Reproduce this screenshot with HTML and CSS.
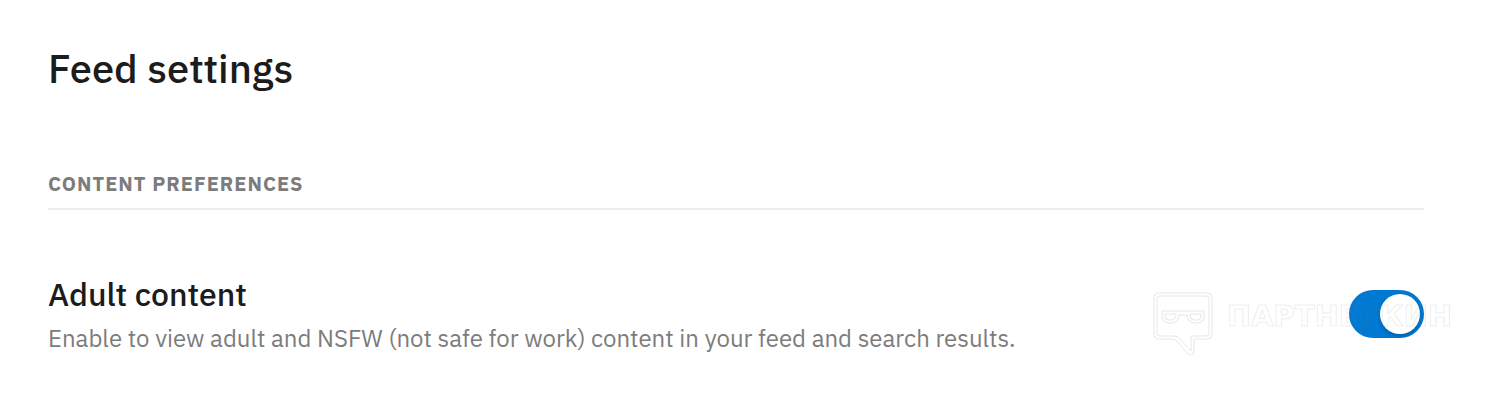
FILE: index.html
```html
<!DOCTYPE html>
<html lang="en">
<head>
  <meta charset="utf-8">
  <title>Feed settings</title>
  <link rel="stylesheet" href="styles.css">
</head>
<body>
  <main class="settings">
    <h1 class="title">Feed settings</h1>
    <h2 class="section-title">Content preferences</h2>
    <div class="row">
      <div class="row-text">
        <label class="row-label" for="adult">Adult content</label>
        <p class="row-desc" id="adultDesc">Enable to view adult and NSFW (not safe for work) content in your feed and search results.</p>
      </div>
      <input class="switch" type="checkbox" id="adult" aria-describedby="adultDesc" checked>
      <div class="watermark">
        <svg class="watermark-logo" width="60" height="64" viewBox="0 0 60 64" fill="none" stroke="currentColor">
          <path d="M6 1H54Q59 1 59 6V42Q59 47 54 47H41V59Q41 63 38 63Q36 63 35 62L24 49Q22 47 19 47H6Q1 47 1 42V6Q1 1 6 1Z"/>
          <path d="M7 4H53Q56 4 56 7V41Q56 44 53 44H38V59L26 46Q24 44 20 44H7Q4 44 4 41V7Q4 4 7 4Z"/>
          <path d="M9 19H51V24Q51 31 44 31H42Q35 31 34 23H26Q25 31 18 31H16Q9 31 9 24Z"/>
          <path d="M12 22H23Q23 28 18 28H16Q12 28 12 24ZM37 22H48V24Q48 28 44 28H42Q37 28 37 22Z"/>
        </svg>
        <span class="watermark-text">ПАРТНЕРКИН</span>
      </div>
    </div>
  </main>
</body>
</html>
```
FILE: styles.css
```css
body {
  margin: 0;
  background: #fff;
  color: #1c1c1c;
  font-family: "IBM Plex Sans", "Noto Sans", sans-serif;
}

.settings {
  padding: 42px 78px 48px 48px;
}

.title {
  margin: 0 0 78px;
  font-size: 40px;
  line-height: 52px;
  font-weight: 500;
}

.section-title {
  margin: 0 0 64px;
  padding-bottom: 12px;
  border-bottom: 2px solid #ededed;
  color: #7c7c7c;
  font-size: 20px;
  line-height: 24px;
  font-weight: 700;
  letter-spacing: 1px;
  text-transform: uppercase;
}

.row {
  position: relative;
  display: flex;
  align-items: center;
  justify-content: space-between;
}

.row-label {
  display: block;
  margin-bottom: 8px;
  font-size: 32px;
  line-height: 40px;
  font-weight: 500;
}

.row-desc {
  margin: 0;
  color: #7c7c7c;
  font-size: 24px;
  line-height: 32px;
}

/* toggle */
.switch {
  appearance: none;
  flex: none;
  box-sizing: border-box;
  width: 75px;
  height: 48px;
  margin: 0;
  padding: 4px;
  display: flex;
  border-radius: 24px;
  background: #0079d3;
  cursor: pointer;
}

.switch::before {
  content: "";
  width: 40px;
  height: 40px;
  border-radius: 50%;
  background: #fff;
  box-shadow: 0 2px 4px rgba(0, 0, 0, 0.2);
}

.switch:checked {
  justify-content: flex-end;
}

.switch:not(:checked) {
  background: #d7dadc;
}

/* watermark */
.watermark {
  position: absolute;
  top: 18px;
  right: -28px;
  display: flex;
  align-items: flex-start;
  gap: 14px;
  color: rgba(128, 128, 128, 0.2);
  pointer-events: none;
}

.watermark-text {
  font-family: "DejaVu Sans", sans-serif;
  font-size: 29px;
  line-height: 48px;
  font-weight: 700;
  color: transparent;
  -webkit-text-stroke: 1px rgba(128, 128, 128, 0.16);
}
```
